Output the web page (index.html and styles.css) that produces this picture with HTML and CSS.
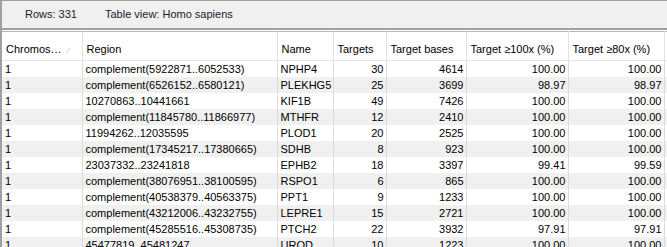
FILE: index.html
```html
<!DOCTYPE html>
<html lang="en">
<head>
  <meta charset="UTF-8" />
  <title>Table view: Homo sapiens</title>
  <link rel="stylesheet" href="styles.css">
</head>
<body>
  <div class="window">
    <div class="toolbar">
      <span class="rows">Rows: 331</span>
      <span class="view">Table view: Homo sapiens</span>
    </div>
    <div class="table-wrap">
      <table class="grid">
        <colgroup>
          <col class="c-chr">
          <col class="c-region">
          <col class="c-name">
          <col class="c-targets">
          <col class="c-bases">
          <col class="c-100">
          <col class="c-80">
          <col>
        </colgroup>
        <thead>
          <tr>
            <th>Chromos…<span class="sort">⁄</span></th>
            <th>Region</th>
            <th>Name</th>
            <th>Targets</th>
            <th>Target bases</th>
            <th>Target ≥100x (%)</th>
            <th>Target ≥80x (%)</th>
            <th></th>
          </tr>
        </thead>
        <tbody>
          <tr><td>1</td><td>complement(5922871..6052533)</td><td>NPHP4</td><td class="num">30</td><td class="num">4614</td><td class="num">100.00</td><td class="num">100.00</td><td></td></tr>
          <tr><td>1</td><td>complement(6526152..6580121)</td><td>PLEKHG5</td><td class="num">25</td><td class="num">3699</td><td class="num">98.97</td><td class="num">98.97</td><td></td></tr>
          <tr><td>1</td><td>10270863..10441661</td><td>KIF1B</td><td class="num">49</td><td class="num">7426</td><td class="num">100.00</td><td class="num">100.00</td><td></td></tr>
          <tr><td>1</td><td>complement(11845780..11866977)</td><td>MTHFR</td><td class="num">12</td><td class="num">2410</td><td class="num">100.00</td><td class="num">100.00</td><td></td></tr>
          <tr><td>1</td><td>11994262..12035595</td><td>PLOD1</td><td class="num">20</td><td class="num">2525</td><td class="num">100.00</td><td class="num">100.00</td><td></td></tr>
          <tr><td>1</td><td>complement(17345217..17380665)</td><td>SDHB</td><td class="num">8</td><td class="num">923</td><td class="num">100.00</td><td class="num">100.00</td><td></td></tr>
          <tr><td>1</td><td>23037332..23241818</td><td>EPHB2</td><td class="num">18</td><td class="num">3397</td><td class="num">99.41</td><td class="num">99.59</td><td></td></tr>
          <tr><td>1</td><td>complement(38076951..38100595)</td><td>RSPO1</td><td class="num">6</td><td class="num">865</td><td class="num">100.00</td><td class="num">100.00</td><td></td></tr>
          <tr><td>1</td><td>complement(40538379..40563375)</td><td>PPT1</td><td class="num">9</td><td class="num">1233</td><td class="num">100.00</td><td class="num">100.00</td><td></td></tr>
          <tr><td>1</td><td>complement(43212006..43232755)</td><td>LEPRE1</td><td class="num">15</td><td class="num">2721</td><td class="num">100.00</td><td class="num">100.00</td><td></td></tr>
          <tr><td>1</td><td>complement(45285516..45308735)</td><td>PTCH2</td><td class="num">22</td><td class="num">3932</td><td class="num">97.91</td><td class="num">97.91</td><td></td></tr>
          <tr><td>1</td><td>45477819..45481247</td><td>UROD</td><td class="num">10</td><td class="num">1223</td><td class="num">100.00</td><td class="num">100.00</td><td></td></tr>
        </tbody>
      </table>
    </div>
  </div>
</body>
</html>
```

FILE: styles.css
```css
* {
  margin: 0;
  padding: 0;
  box-sizing: border-box;
}

body {
  font-family: "Liberation Sans", Arial, sans-serif;
  font-size: 11px;
  color: #000;
  background: #fff;
  overflow: hidden;
}

.window {
  width: 667px;
  height: 247px;
  border-left: 2px solid #a0a0a0;
  overflow: hidden;
}

.toolbar {
  height: 30px;
  display: flex;
  align-items: center;
  gap: 28px;
  padding: 0 0 2px 23px;
  background: #f0f0f0;
  border-top: 1px solid #a0a0a0;
  border-bottom: 2px solid #a0a0a0;
  color: #1a1a2e;
}

.table-wrap {
  border-top: 1px solid #fff;
}

.grid {
  table-layout: fixed;
  border-collapse: collapse;
  width: 700px;
  border-top: 1px solid #b4b4b4;
}

.c-chr { width: 80px; }
.c-region { width: 195px; }
.c-name { width: 56px; }
.c-targets { width: 53px; }
.c-bases { width: 80px; }
.c-100 { width: 102px; }
.c-80 { width: 96px; }

th {
  height: 29px;
  font-weight: normal;
  text-align: left;
  padding: 6px 4px 0;
  white-space: nowrap;
  overflow: hidden;
  border-right: 1px solid #e3e3e3;
  border-bottom: 1px solid #e3e3e3;
  background: #fff;
}

.sort {
  color: #b0b0b0;
  font-size: 8px;
  margin-left: 6px;
}

td {
  height: 16px;
  padding: 1px 2px 0 3px;
  white-space: nowrap;
  overflow: hidden;
  border-right: 1px solid #dcdcdc;
  line-height: 15px;
}

td.num {
  text-align: right;
}

tbody tr:nth-child(even) td {
  background: #f0f0f0;
}
```
